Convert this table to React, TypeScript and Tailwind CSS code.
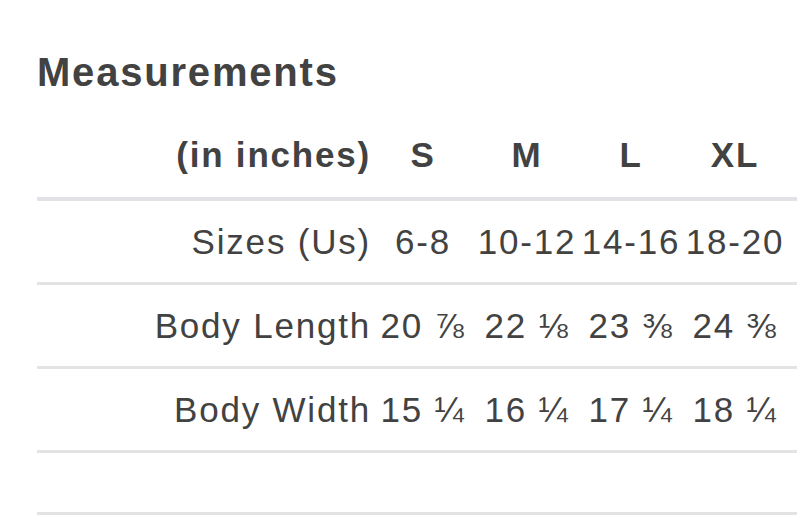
const sizes = ['S', 'M', 'L', 'XL'];

const rows = [
    { label: 'Sizes (Us)', values: ['6-8', '10-12', '14-16', '18-20'] },
    { label: 'Body Length', values: ['20 ⅞', '22 ⅛', '23 ⅜', '24 ⅜'] },
    { label: 'Body Width', values: ['15 ¼', '16 ¼', '17 ¼', '18 ¼'] },
];

const grid = 'grid grid-cols-[334px_104px_104px_104px_104px]';

export default function App() {
    return (
        <div
            className="min-h-[526px] w-[797px] overflow-hidden bg-white text-[#424242]"
            style={{ fontFamily: '"Liberation Sans", Arial, sans-serif' }}
        >
            <h2 className="ml-[37px] pt-[52px] text-[40px] font-bold leading-[40px] tracking-[1.8px]">
                Measurements
            </h2>

            <div className="ml-[37px]">
                <div
                    className={`${grid} h-[109px] items-end border-b-4 border-[#e1e1e6] pb-[25px] text-[35px] font-bold leading-[35px] tracking-[1.8px]`}
                >
                    <div className="text-right">(in inches)</div>
                    {sizes.map((s) => (
                        <div key={s} className="text-center">
                            {s}
                        </div>
                    ))}
                </div>

                {rows.map((row) => (
                    <div
                        key={row.label}
                        className={`${grid} h-[84px] items-center border-b-[3px] border-[#e3e3e3] text-[35px] leading-[35px] tracking-[1.8px]`}
                    >
                        <div className="text-right">{row.label}</div>
                        {row.values.map((v, i) => (
                            <div key={i} className="whitespace-nowrap text-center">
                                {v}
                            </div>
                        ))}
                    </div>
                ))}

                <div className="h-[62px] border-b-[3px] border-[#e3e3e3]" />
            </div>
        </div>
    );
}
